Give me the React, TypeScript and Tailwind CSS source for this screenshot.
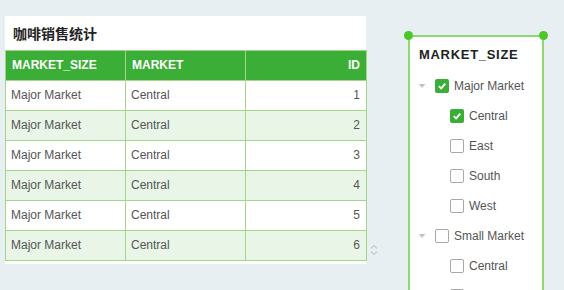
import React from 'react';

const rows = [1, 2, 3, 4, 5, 6];

const Check = ({ on }: { on: boolean }) =>
  on ? (
    <span className="flex h-[14px] w-[14px] items-center justify-center rounded-[2px] bg-[#3aae36]">
      <svg width="10" height="10" viewBox="0 0 10 10">
        <path d="M1.8 5.2 L4.1 7.4 L8.3 2.6" fill="none" stroke="white" strokeWidth="1.8" />
      </svg>
    </span>
  ) : (
    <span className="h-[14px] w-[14px] rounded-[2px] border border-[#a8a8a8] bg-white" />
  );

const Caret = () => (
  <svg width="8" height="6" viewBox="0 0 8 6" className="mr-[9px]">
    <path d="M0.5 1 L7.5 1 L4 5 Z" fill="#c4c4c4" />
  </svg>
);

const items: { label: string; level: number; on: boolean }[] = [
  { label: 'Major Market', level: 0, on: true },
  { label: 'Central', level: 1, on: true },
  { label: 'East', level: 1, on: false },
  { label: 'South', level: 1, on: false },
  { label: 'West', level: 1, on: false },
  { label: 'Small Market', level: 0, on: false },
  { label: 'Central', level: 1, on: false },
  { label: 'East', level: 1, on: false },
];

export default function App() {
  return (
    <div
      className="flex h-[290px] w-[564px] items-start overflow-hidden bg-[#e8eff3]"
      style={{ fontFamily: '"Liberation Sans", Arial, "Noto Sans CJK SC", sans-serif' }}
    >
      {/* table widget */}
      <div className="ml-[5px] mt-[16px] w-[361px] bg-white pb-[3px]">
        <div
          className="flex h-[34px] items-center pl-[8px] text-[14px] font-bold text-[#222]"
          style={{ fontFamily: '"Noto Sans CJK SC", sans-serif' }}
        >
          咖啡销售统计
        </div>
        <table className="w-[361px] table-fixed border-collapse text-[12px]">
          <colgroup>
            <col className="w-[120px]" />
            <col className="w-[120px]" />
            <col className="w-[121px]" />
          </colgroup>
          <thead>
            <tr className="h-[30px] bg-[#3aae36] font-bold text-white">
              <th className="border border-[#a4d48a] px-[6px] pb-[2px] text-left">MARKET_SIZE</th>
              <th className="border border-[#a4d48a] px-[6px] pb-[2px] text-left">MARKET</th>
              <th className="border border-[#a4d48a] px-[6px] pb-[2px] text-right">ID</th>
            </tr>
          </thead>
          <tbody className="text-[#555]">
            {rows.map((id, i) => (
              <tr key={id} className={`h-[30px] ${i % 2 ? 'bg-[#e8f5e7]' : 'bg-white'}`}>
                <td className="border border-[#a4d48a] px-[5px] pb-[2px]">Major Market</td>
                <td className="border border-[#a4d48a] px-[5px] pb-[2px]">Central</td>
                <td className="border border-[#a4d48a] px-[6px] pb-[2px] text-right">{id}</td>
              </tr>
            ))}
          </tbody>
        </table>
      </div>

      {/* scroll arrows */}
      <div className="ml-[3px] mt-[244px] flex flex-col items-center">
        <svg width="10" height="12" viewBox="0 0 10 12">
          <path d="M2 4.5 L5 1.5 L8 4.5 M2 7.5 L5 10.5 L8 7.5" fill="none" stroke="#c6cbce" strokeWidth="1.2" />
        </svg>
      </div>

      {/* filter widget */}
      <div className="relative ml-[29px] mt-[35px] h-[270px] w-[136px] border-2 border-[#8ed873] bg-white">
        <span className="absolute -left-[6px] -top-[6px] h-[9px] w-[9px] rounded-full bg-[#4cc725]" />
        <span className="absolute -right-[6px] -top-[6px] h-[9px] w-[9px] rounded-full bg-[#4cc725]" />
        <div className="pl-[9px] pt-[8px] text-[13px] font-bold tracking-[0.7px] text-[#222]">MARKET_SIZE</div>
        <div className="mt-[6px] flex flex-col">
          {items.map((it, i) => (
            <div
              key={i}
              className={`flex h-[30px] items-center text-[12px] text-[#555] ${it.level ? 'pl-[40px]' : 'pl-[8px]'}`}
            >
              {it.level === 0 && <Caret />}
              <Check on={it.on} />
              <span className="ml-[5px]">{it.label}</span>
            </div>
          ))}
        </div>
      </div>
    </div>
  );
}
